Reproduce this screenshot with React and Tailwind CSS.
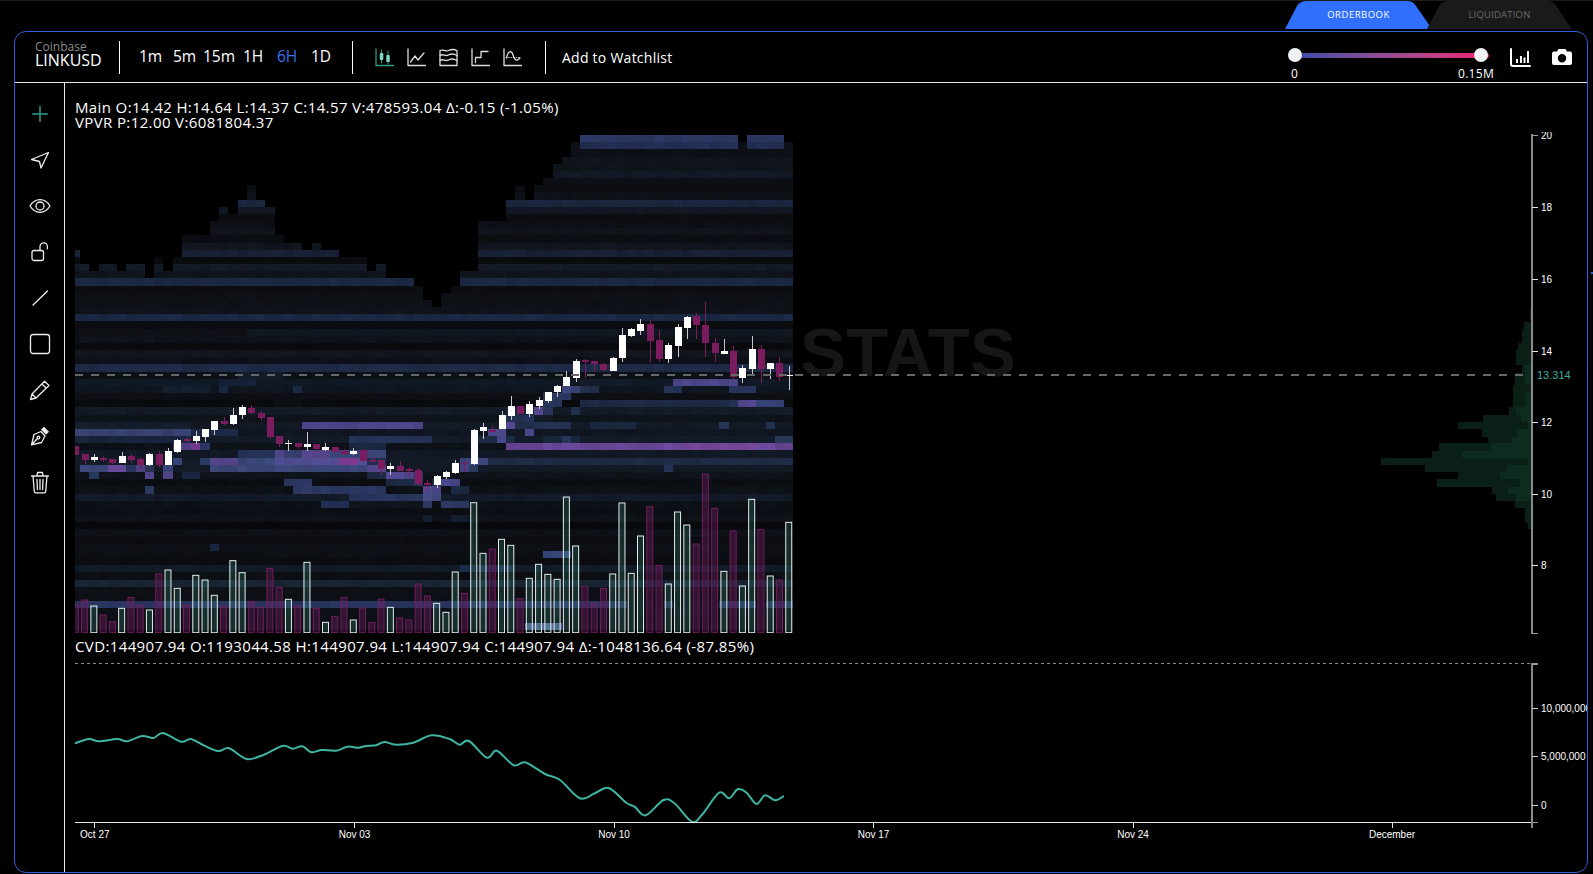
import React from "react";

const STEP = 9.265;
const colX = (i) => (i === 0 ? 75 : 80 + STEP * (i - 1));
const colW = (i) => (i === 0 ? 5 : STEP);
const rowY = (k) => 135 + 7.17 * k;
const center = (i) => 75.33 + STEP * i;
const zy = (z) => 380 + z / 3;

const TOPS = [16,18,19,18,18,19,18,18,20,17,19,17,14,14,14,12,10,11,9,7,9,10,14,15,15,16,15,16,16,17,17,17,19,18,20,20,20,21,23,24,22,21,19,19,12,12,12,9,7,9,7,6,4,3,1,0,0,0,0,0,0,0,0,0,0,0,0,0,0,0,0,0,1,0,0,0,0,1];

const ROWS = ["#2c3a66","#243057","#0d1117","#10151d","#10151d","#131b28","#0d1016","#0c0e13","#0e1218","#1b2840","#121925","#0c0e13","#0d1016","#10141c","#0c0e13","#11161f","#192338","#0a0c10","#141b29","#10141d","#1d2a45","#0c0e12","#0e1116","#0e1117","#10131a","#1c2a47","#0b0d11","#111823","#0f131a","#090b0e","#12171f","#0e1118","#1f2d4c","#0d1118","#111a26","#101722","#0e1015","#0a0b0e","#141c2a","#0f141c","#131b27","#111723","#141c2b","#0e1219","#131a27","#141c2a","#141b28","#0f141c","#0b0e13","#0e1219","#141c2a","#0d1118","#0c0f14","#0f131a","#08090c","#0e1117","#0c0e13","#0e1117","#0d1016","#0b0d11","#131c28","#0c0f14","#1a2535","#0e1117","#0d1016","#2a3762","#0e1219","#0d1016","#0e1118"];

const PATCHES = [
  [1,54,54,"#0d1117"],[1,72,72,"#0d1117"],[1,77,77,"#0d1117"],
  [27,0,18,"#0e1117"],[33,18,22,"#141c2c"],[34,16,19,"#16223a"],[35,10,14,"#16202f"],[35,16,16,"#1a2a45"],[35,24,24,"#1a2a45"],
  [37,22,24,"#0d0f14"],[40,0,12,"#16202f"],[40,25,37,"#4f4a90"],[41,0,12,"#3a4575"],[41,13,17,"#1e2c4a"],[42,30,38,"#26345a"],[42,0,12,"#1a2640"],
  [43,11,12,"#4f4488"],[43,13,13,"#7a3e9a"],[43,14,14,"#2e3b68"],[43,30,33,"#1e2b45"],
  [44,18,21,"#26345a"],[44,22,33,"#3b4577"],[44,22,22,"#574a95"],[44,25,27,"#5b4a95"],
  [45,11,11,"#3a4578"],[45,14,14,"#30406e"],[45,15,17,"#5a4a95"],[45,18,21,"#3c4a7c"],[45,22,31,"#55509a"],[45,29,30,"#8a3fa0"],[45,32,33,"#26345a"],
  [46,1,3,"#3f4a80"],[46,4,5,"#6a4b9a"],[46,6,6,"#2e3a68"],[46,7,7,"#5a4a90"],[46,8,8,"#2a3658"],[46,10,10,"#39477e"],[46,15,31,"#3f4a7e"],[46,32,33,"#584a95"],[46,42,43,"#4a4a90"],
  [47,2,2,"#24375a"],[47,8,8,"#54488f"],[47,10,10,"#5a4a98"],[47,12,13,"#1a2640"],[47,32,33,"#1e2a44"],[47,34,36,"#554a95"],[47,37,37,"#2b3863"],
  [48,23,25,"#2e3b68"],[48,34,36,"#1c2a44"],[48,37,37,"#2b3863"],[48,39,39,"#1c2a44"],[48,40,41,"#4a4a8f"],
  [49,8,8,"#2c3a60"],[49,24,33,"#2e3b68"],[49,38,39,"#4f4a92"],[49,41,42,"#1c2a44"],
  [50,30,40,"#2a3760"],[50,38,39,"#48508a"],[50,40,43,"#141d2c"],
  [51,27,29,"#25315a"],[51,30,37,"#10151f"],[51,38,38,"#333e6c"],[51,40,42,"#2f3a66"],
  [53,38,38,"#141f30"],[53,41,42,"#141f30"],[57,15,15,"#1a2a45"],
  [34,65,71,"#4f4a90"],[34,55,60,"#141d2c"],[35,53,54,"#3e4a80"],[35,55,56,"#22304c"],[35,64,65,"#25345a"],[35,71,73,"#2a3860"],
  [36,51,53,"#2a3860"],[37,51,52,"#2a3860"],[37,55,71,"#1f2c48"],[37,71,71,"#26345a"],[37,72,73,"#574a95"],[37,74,76,"#36447a"],
  [38,47,49,"#1c2840"],[38,50,50,"#5a4a98"],[38,51,51,"#2a3860"],[38,54,54,"#1f2f4a"],[39,47,48,"#22304f"],[39,49,49,"#263460"],[39,50,51,"#141c2a"],
  [40,47,47,"#5a4a98"],[40,48,49,"#22304f"],[40,50,53,"#263456"],[40,56,60,"#1a2a40"],[40,70,70,"#26365a"],[40,75,75,"#26365a"],
  [41,45,46,"#4a4a90"],[41,47,48,"#141c2a"],[41,49,49,"#50509a"],
  [42,44,45,"#1e2b45"],[42,46,46,"#4a4a90"],[42,47,47,"#1e2b45"],[42,51,54,"#1a2a40"],[42,53,53,"#26365a"],[42,76,77,"#2a4060"],
  [43,47,77,"#6d4a9e"],[43,66,73,"#7a4a9f"],
  [45,42,44,"#3f4a85"],[45,45,77,"#1f2d48"],[46,43,43,"#2a3a60"],[46,64,64,"#26365a"],
  [58,51,53,"#3a4a80"],[60,42,47,"#1c2d4a"],
  [65,60,63,"#0e1118"],[65,65,69,"#0e1118"],[65,74,74,"#0e1118"],[65,64,64,"#2a3762"],[68,49,52,"#5a6b9b"],
];

const CANDLES = [
  ["r",198,225,198,225],["r",223,240,223,252],["w",232,240,222,246],["r",233,240,228,245],["r",237,249,237,252],["w",228,249,216,249],["r",228,240,222,248],["r",236,255,232,268],["w",222,256,218,258],["r",222,255,212,262],["w",212,255,205,255],["w",180,216,177,218],["r",178,184,172,190],["w",169,184,154,192],["w",148,172,148,185],["w",122,150,122,164],["r",122,132,110,134],["w",104,132,84,136],["w",82,106,76,116],["r",83,100,76,102],["r",98,113,94,124],["r",110,172,110,176],["r",168,192,168,200],["w",188,191,180,213],["r",190,202,190,206],["w",192,201,156,213],["r",192,208,192,218],["w",201,209,190,214],["r",200,215,200,218],["r",213,221,207,226],["w",212,222,204,226],["r",210,244,208,248],["r",241,244,230,247],["r",240,267,240,284],["w",258,266,250,286],["r",258,272,243,274],["r",268,274,262,285],["r",270,313,264,316],["r",309,316,300,332],["w",287,316,286,323],["w",275,290,272,296],["w",248,278,240,282],["r",248,252,240,275],
  ["w",150,252,148,254],["w",141,153,130,176],["r",150,153,138,160],["w",105,146,92,146],["w",77,108,48,120],["r",77,103,77,103],["w",73,101,64,112],["w",60,77,52,88],["w",35,63,35,68],["w",17,37,14,52],["w",-8,18,-26,18],["w",-58,-5,-62,5],["r",-60,-56,-62,-5],["r",-57,-47,-57,-25],["r",-47,-30,-50,-28],["w",-66,-28,-70,-26],["w",-135,-65,-155,-55],["w",-152,-132,-155,-128],["w",-168,-148,-182,-136],["r",-168,-116,-180,-50],["r",-120,-62,-150,-54],["w",-104,-62,-110,-50],["w",-159,-102,-168,-70],["w",-190,-156,-192,-124],["r",-192,-164,-202,-124],["r",-165,-110,-235,-70],["r",-110,-80,-125,-55],["w",-86,-79,-122,-79],["r",-86,-10,-102,0],["w",-36,-6,-45,8],["w",-94,-34,-132,-15],["r",-94,-34,-104,10],["w",-52,-34,-52,-4],["r",-52,-10,-70,2],["w",-16,-12,-42,30],
];

const VOL = [[672,"r"],[660,"r"],[678,"w"],[705,"r"],[725,"r"],[685,"w"],[652,"r"],[676,"r"],[690,"w"],[582,"r"],[570,"w"],[625,"w"],[676,"r"],[586,"w"],[600,"w"],[646,"w"],[678,"r"],[542,"w"],[578,"w"],[664,"r"],[682,"r"],[565,"r"],[622,"r"],[658,"w"],[678,"r"],[547,"w"],[685,"r"],[727,"w"],[710,"r"],[652,"r"],[720,"w"],[684,"r"],[728,"r"],[657,"r"],[682,"w"],[714,"r"],[720,"r"],[612,"r"],[648,"r"],[670,"w"],[697,"w"],[576,"w"],[640,"r"],[368,"w"],[520,"w"],[507,"r"],[478,"w"],[496,"w"],[656,"r"],[595,"w"],[553,"w"],[583,"w"],[598,"w"],[351,"w"],[498,"w"],[620,"r"],[670,"r"],[625,"r"],[582,"w"],[369,"w"],[580,"w"],[468,"w"],[380,"r"],[556,"r"],[612,"w"],[396,"w"],[435,"w"],[492,"r"],[282,"r"],[385,"r"],[574,"w"],[453,"r"],[618,"w"],[358,"w"],[448,"r"],[588,"w"],[600,"r"],[427,"w"]];

const PROFILE_OUT = [[565,600,570],[605,628,552],[628,670,546],[670,690,534],[690,735,528],[735,760,546],[760,795,525],[795,820,519],[820,862,518],[862,885,507],[885,905,430],[905,928,354],[928,950,426],[950,970,444],[970,992,297],[992,1014,276],[1014,1035,124],[1035,1057,255],[1057,1078,354],[1078,1100,290],[1100,1122,456],[1122,1143,468],[1143,1165,526],[1165,1186,555],[1186,1208,556],[1208,1228,564]];
const PROFILE_IN = [[735,795,556],[820,862,555],[862,885,528],[885,905,543],[905,928,565],[928,950,532],[950,970,516],[970,992,452],[992,1014,365],[1014,1035,564],[1035,1057,500],[1057,1078,480],[1078,1100,540],[1100,1122,505],[1122,1143,527]];

const LINE = [[30,340],[58,327],[78,334],[115,327],[135,334],[165,318],[188,324],[207,309],[243,335],[263,327],[290,347],[318,363],[340,355],[375,387],[410,374],[447,348],[468,356],[487,349],[505,367],[525,360],[555,362],[578,350],[600,353],[615,348],[635,346],[652,336],[675,344],[710,338],[747,316],[783,327],[803,344],[822,333],[858,383],[878,362],[912,406],[935,397],[975,432],[1005,450],[1045,505],[1075,490],[1103,474],[1138,518],[1155,530],[1177,556],[1213,510],[1235,520],[1270,575],[1290,555],[1325,488],[1345,505],[1362,478],[1380,488],[1400,522],[1417,496],[1438,511],[1455,498]].map(([x, y]) => [60 + x / 2.01, 630 + y / 3]);

function smooth(pts) {
  let d = `M${pts[0][0].toFixed(1)} ${pts[0][1].toFixed(1)}`;
  for (let i = 0; i < pts.length - 1; i++) {
    const p0 = pts[Math.max(0, i - 1)], p1 = pts[i], p2 = pts[i + 1], p3 = pts[Math.min(pts.length - 1, i + 2)];
    const c1 = [p1[0] + (p2[0] - p0[0]) / 6, p1[1] + (p2[1] - p0[1]) / 6];
    const c2 = [p2[0] - (p3[0] - p1[0]) / 6, p2[1] - (p3[1] - p1[1]) / 6];
    d += `C${c1[0].toFixed(1)} ${c1[1].toFixed(1)} ${c2[0].toFixed(1)} ${c2[1].toFixed(1)} ${p2[0].toFixed(1)} ${p2[1].toFixed(1)}`;
  }
  return d;
}

function cellColor(k, c) {
  let color = ROWS[k];
  for (const [pk, a, b, col] of PATCHES) if (pk === k && c >= a && c <= b) color = col;
  return color;
}
const noise = (k, c) => {
  const s = Math.sin(k * 12.9898 + c * 78.233) * 43758.5453;
  return s - Math.floor(s);
};

function Heatmap() {
  const cells = [];
  for (let c = 0; c < 78; c++) {
    for (let k = TOPS[c]; k < 69; k++) {
      cells.push(<rect key={`${c}-${k}`} x={colX(c)} y={rowY(k)} width={colW(c)} height={7.17} fill={cellColor(k, c)} opacity={0.88 + 0.12 * noise(k, c)} />);
    }
  }
  return <g shapeRendering="crispEdges">{cells}</g>;
}

function PriceChart() {
  const ticks = [[135,"20"],[207.5,"18"],[279,"16"],[351,"14"],[422.5,"12"],[494,"10"],[565.5,"8"],[633.5,""]];
  return (
    <svg viewBox="65 132 1522 506" className="block h-[506px] w-[1522px] shrink-0">
      <defs>
        <clipPath id="plot"><rect x="75" y="130" width="718.4" height="503" /></clipPath>
      </defs>
      <text x="800" y="376" fontFamily="Liberation Sans, sans-serif" fontWeight="700" fontSize="69" fill="#161616">STATS</text>
      <Heatmap />
      <g shapeRendering="crispEdges">
        {PROFILE_OUT.map(([a, b, x], i) => <rect key={i} x={1340 + x / 3} y={120 + a / 3} width={1531 - (1340 + x / 3)} height={(b - a) / 3} fill="#0a1f15" />)}
        {PROFILE_IN.map(([a, b, x], i) => <rect key={i} x={1340 + x / 3} y={120 + a / 3} width={1531 - (1340 + x / 3)} height={(b - a) / 3} fill="#0d2b1e" />)}
      </g>
      <g clipPath="url(#plot)">
        {VOL.map(([z, t], i) => (
          <rect key={i} x={center(i) - 3} y={zy(z)} width={6} height={632.7 - zy(z)} fill={t === "w" ? "rgba(70,170,150,0.2)" : "rgba(125,30,105,0.35)"} stroke={t === "w" ? "#e2eeeb" : "#6f1f5c"} strokeWidth="1" />
        ))}
      </g>
      <g shapeRendering="crispEdges" clipPath="url(#plot)">
        {CANDLES.map(([t, a, b, w1, w2], i) => {
          const x = center(i);
          const col = t === "w" ? "#ffffff" : "#7a1c5e";
          return (
            <g key={i}>
              <line x1={Math.round(x) + 0.5} x2={Math.round(x) + 0.5} y1={zy(w1)} y2={zy(w2)} stroke={t === "w" ? "#c9c9c9" : "#7a1c5e"} strokeWidth="1" />
              <rect x={Math.round(x) - 3} y={zy(a)} width={7} height={Math.max(1.5, (b - a) / 3)} fill={col} />
            </g>
          );
        })}
      </g>
      <line x1="75" x2="1523" y1="375" y2="375" stroke="#646969" strokeWidth="2" strokeDasharray="8 8" shapeRendering="crispEdges" />
      <line x1="1532" x2="1532" y1="134" y2="634" stroke="#8a8a8a" strokeWidth="2" shapeRendering="crispEdges" />
      {ticks.map(([y, l]) => (
        <g key={y}>
          <line x1="1532" x2="1538" y1={y} y2={y} stroke={l === "20" || l === "" ? "#9a9a9a" : "#e5e5e5"} shapeRendering="crispEdges" />
          <text x="1541" y={y + 3.5} fontFamily="Liberation Sans, sans-serif" fontSize="10" fill="#ffffff">{l}</text>
        </g>
      ))}
      <text x="1537" y="379" fontFamily="Liberation Sans, sans-serif" fontSize="11" fill="#3fae9c">13.314</text>
    </svg>
  );
}

function CvdChart() {
  const xt = [[94.8,"Oct 27"],[354.5,"Nov 03"],[614,"Nov 10"],[873.6,"Nov 17"],[1133,"Nov 24"],[1392,"December"]];
  const yt = [[708.5,"10,000,000"],[756.5,"5,000,000"],[805,"0"]];
  return (
    <svg viewBox="65 655 1522 217" className="block h-[217px] w-[1522px] shrink-0">
      <line x1="75" x2="1532" y1="663.5" y2="663.5" stroke="#8a8a8a" strokeDasharray="3 3" shapeRendering="crispEdges" />
      <path d={smooth(LINE)} fill="none" stroke="#3eb5a2" strokeWidth="2" />
      <line x1="75" x2="1532" y1="822.5" y2="822.5" stroke="#e8e8e8" shapeRendering="crispEdges" />
      <line x1="1532" x2="1532" y1="663" y2="828" stroke="#8a8a8a" strokeWidth="2" shapeRendering="crispEdges" />
      <line x1="1532" x2="1538" y1="663.5" y2="663.5" stroke="#9a9a9a" strokeWidth="2" shapeRendering="crispEdges" />
      <line x1="1532" x2="1538" y1="822.5" y2="822.5" stroke="#9a9a9a" shapeRendering="crispEdges" />
      {xt.map(([x, l]) => (
        <g key={l}>
          <line x1={x} x2={x} y1="822" y2="828" stroke="#e8e8e8" shapeRendering="crispEdges" />
          <text x={x} y="838" textAnchor="middle" fontFamily="Liberation Sans, sans-serif" fontSize="10" fill="#ffffff">{l}</text>
        </g>
      ))}
      {yt.map(([y, l]) => (
        <g key={l}>
          <line x1="1532" x2="1538" y1={y} y2={y} stroke="#cfcfcf" shapeRendering="crispEdges" />
          <text x="1541" y={y + 3.5} fontFamily="Liberation Sans, sans-serif" fontSize="10" fill="#ffffff">{l}</text>
        </g>
      ))}
    </svg>
  );
}

const S = { fill: "none", stroke: "currentColor", strokeWidth: 1.3, strokeLinecap: "round", strokeLinejoin: "round" };

const ToolIcons = [
  <svg key="plus" width="20" height="20" viewBox="0 0 20 20" className="text-[#2f9c86]"><path d="M10 2.500v15M2.500 10h15" {...S} strokeWidth="1.5" /></svg>,
  <svg key="send" width="20" height="20" viewBox="0 0 20 20" className="text-[#eeeeee]"><path d="M1.500 9.500 18.500 2.500 11 18 9.500 11.500Z" {...S} /></svg>,
  <svg key="eye" width="22" height="22" viewBox="0 0 22 22" className="text-[#eeeeee]"><path d="M1 11c2.600-4.300 6-6.300 10-6.300s7.400 2 10 6.300c-2.600 4.300-6 6.300-10 6.300S3.600 15.300 1 11Z" {...S} /><circle cx="11" cy="11" r="4" {...S} /></svg>,
  <svg key="lock" width="20" height="20" viewBox="0 0 20 20" className="text-[#eeeeee]"><rect x="2" y="8.500" width="11.500" height="10" rx="2" {...S} /><path d="M10 8.500V4.500a3.700 3.700 0 0 1 7.400 0v2.300" {...S} /></svg>,
  <svg key="line" width="20" height="20" viewBox="0 0 20 20" className="text-[#eeeeee]"><path d="M3 17 17.500 3" {...S} /></svg>,
  <svg key="sq" width="22" height="22" viewBox="0 0 22 22" className="text-[#eeeeee]"><rect x="1.500" y="1.500" width="19" height="19" rx="2.500" {...S} /></svg>,
  <svg key="pencil" width="22" height="22" viewBox="0 0 22 22" className="text-[#eeeeee]"><path d="M1.500 20.500 3 15 15.500 2.200 20 6.500 7 19Z M13 5l4.300 4.200 M3 15l4 4" {...S} /></svg>,
  <svg key="nib" width="20" height="20" viewBox="0 0 20 20" className="text-[#eeeeee]"><path d="M1.500 18.800 4 8.500 11 5.500 15 10 11.500 16.500Z M1.500 18.800 7.500 12.500" {...S} /><circle cx="8.500" cy="11.500" r="1.300" {...S} /><path d="M11 3.500 14 .8 19 5.800 16 8.800Z" fill="currentColor" /></svg>,
  <svg key="trash" width="20" height="24" viewBox="0 0 20 24" className="text-[#eeeeee]"><path d="M1.500 6h17M7 5.500 7.500 2.500h5l.5 3M3 6l1.300 15.500a1.500 1.500 0 0 0 1.500 1.300h8.400a1.500 1.500 0 0 0 1.500-1.300L17 6M7 9.500l.4 10M10 9.500v10M13 9.500l-.4 10" {...S} /></svg>,
];

const ChartTypeIcons = [
  <svg key="a" width="19" height="19" viewBox="0 0 19 19" className="text-[#2f9c86]"><path d="M1 1v16.500h17.500" {...S} /><path d="M6.500 2v13M13 3v13" {...S} strokeWidth="1" /><rect x="4.800" y="5" width="3.500" height="7" rx="1" fill="#7fd8c6" /><rect x="11.300" y="7" width="3.500" height="7" rx="1" fill="#7fd8c6" /></svg>,
  <svg key="b" width="19" height="19" viewBox="0 0 19 19" className="text-[#dcdcdc]"><path d="M1 1v16.500h17.500" {...S} /><path d="M3.500 14 8 8 11 12 17 5" {...S} /></svg>,
  <svg key="c" width="19" height="19" viewBox="0 0 19 19" className="text-[#dcdcdc]"><path d="M1 2.500c3-1.500 5 1.500 8.500 0S15 1 18 2.500V17.500H1Z" {...S} /><path d="M1 7.500c3-2.500 5 1.500 8.500-.5s6-1 8.500.5M1 12.500c3-2.500 5 1.500 8.500-.5s6-1 8.500.5" {...S} /></svg>,
  <svg key="d" width="19" height="19" viewBox="0 0 19 19" className="text-[#dcdcdc]"><path d="M1 1v16.500h17.500" {...S} /><path d="M4.500 14.500v-5h5.500v-6h7" {...S} /></svg>,
  <svg key="e" width="19" height="19" viewBox="0 0 19 19" className="text-[#dcdcdc]"><path d="M1 1v16.500h17.500" {...S} /><path d="M3.500 10c2-8 5-8 6.500-3s3.500 7 7 3" {...S} /><path d="M3 9.500h14" {...S} strokeWidth="0.8" strokeDasharray="1 1.500" /></svg>,
];

const Tab = ({ label, active }) => (
  <div className={`relative flex h-[28px] items-center justify-center ${active ? "w-[147px] text-white" : "-ml-[5px] w-[145px] text-[#6b6b6b]"}`}>
    <svg viewBox="0 0 147 28" preserveAspectRatio="none" className="absolute inset-0 h-full w-full">
      <path d="M0 28 L12 5 Q15 0 22 0 H122 Q128 0 131 5 L147 28 Z" fill={active ? "#2f6ffb" : "#1a1a1a"} />
    </svg>
    <span className={`relative text-[9.5px] ${active ? "tracking-[0.5px]" : "tracking-[0.2px]"}`}>{label}</span>
  </div>
);

export default function App() {
  return (
    <div className="relative flex h-[874px] w-[1593px] flex-col overflow-hidden border-t border-[#1c1c1c] bg-black text-white font-['Open_Sans',sans-serif]">
      <div className="flex h-[29px] shrink-0 items-start justify-end pr-[21px]">
        <Tab label="ORDERBOOK" active />
        <Tab label="LIQUIDATION" />
      </div>
      <div className="ml-[14px] mt-[1px] flex h-[842px] w-[1574px] flex-col overflow-hidden rounded-[12px] border border-[#2f5fd6]">
        <header className="box-content flex h-[50px] shrink-0 items-center border-b border-[#e8e8e8]">
          <div className="-mt-[8px] ml-[20px] w-[84px]">
            <div className="text-[12px] leading-[13px] text-[#8b8b8b]">Coinbase</div>
            <div className="text-[16px] leading-[14px]">LINKUSD</div>
          </div>
          <div className="h-[33px] w-px bg-white" />
          <div className="ml-[19px] flex text-[15.5px]">
            <span className="w-[24px]">1m</span>
            <span className="ml-[10px] w-[24px]">5m</span>
            <span className="ml-[6px] w-[33px]">15m</span>
            <span className="ml-[7px] w-[21px]">1H</span>
            <span className="ml-[13px] w-[21px] text-[#3a6ff0]">6H</span>
            <span className="ml-[13px] w-[21px]">1D</span>
          </div>
          <div className="ml-[20px] h-[33px] w-px bg-white" />
          <div className="ml-[22px] flex items-center gap-[13px]">{ChartTypeIcons}</div>
          <div className="ml-[23px] h-[33px] w-px bg-white" />
          <div className="ml-[16px] text-[14px] tracking-[0.25px]">Add to Watchlist</div>
          <div className="relative ml-auto mr-[15px] flex items-center gap-[21px]">
            <div className="relative -mt-[2px] h-[40px] w-[201px]">
              <div className="absolute left-[9px] top-[17px] h-[5px] w-[192px] rounded-sm bg-gradient-to-r from-[#3a4aa8] to-[#f01070]" />
              <div className="absolute left-[0px] top-[12px] h-[14px] w-[14px] rounded-full bg-[#f0f2f5]" />
              <div className="absolute left-[186px] top-[12px] h-[14px] w-[14px] rounded-full bg-[#f0f2f5]" />
              <div className="absolute left-[3px] top-[30px] text-[12px] leading-[16px]">0</div>
              <div className="absolute left-[170px] top-[30px] text-[12px] leading-[16px] tracking-[0.3px]">0.15M</div>
            </div>
            <svg width="21" height="19" viewBox="0 0 21 19"><path d="M1 1v15a2 2 0 0 0 2 2h17" fill="none" stroke="#fff" strokeWidth="2" strokeLinecap="round" /><path d="M6 11h2v4H6zM10 8h2v7h-2zM13.500 9.500h2V15h-2zM17 3h2v12h-2z" fill="#fff" /></svg>
            <svg width="20" height="18" viewBox="0 0 20 18"><path fillRule="evenodd" clipRule="evenodd" d="M6.500 1h7l1.500 2.500h3a2 2 0 0 1 2 2V15a2 2 0 0 1-2 2H2a2 2 0 0 1-2-2V5.500a2 2 0 0 1 2-2h3ZM10 6a4.200 4.200 0 1 0 0 8.400A4.200 4.200 0 0 0 10 6Z" fill="#fff" /></svg>
          </div>
        </header>
        <div className="flex min-h-0 flex-1">
          <aside className="box-content flex w-[49px] shrink-0 flex-col items-center border-r border-[#e8e8e8] pt-[8px]">
            {ToolIcons.map((icon, i) => (
              <div key={i} className="flex h-[46px] w-full items-center justify-center">{icon}</div>
            ))}
          </aside>
          <main className="flex min-w-0 flex-1 flex-col overflow-hidden">
            <div className="h-[49px] shrink-0 pl-[10px] pt-[17px] text-[15px] leading-[15px] tracking-[0.38px]">
              <div>Main O:14.42 H:14.64 L:14.37 C:14.57 V:478593.04 Δ:-0.15 (-1.05%)</div>
              <div>VPVR P:12.00 V:6081804.37</div>
            </div>
            <PriceChart />
            <div className="h-[17px] shrink-0 pl-[10px] text-[15px] leading-[17px] tracking-[0.38px]">CVD:144907.94 O:1193044.58 H:144907.94 L:144907.94 C:144907.94 Δ:-1048136.64 (-87.85%)</div>
            <CvdChart />
          </main>
        </div>
      </div>
      <div className="absolute left-[1591px] top-[271px] h-[2px] w-[2px] bg-[#2f5fd6]" />
    </div>
  );
}
